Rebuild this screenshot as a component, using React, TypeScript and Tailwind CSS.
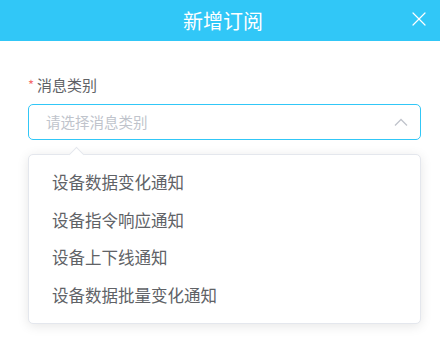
import { X } from 'lucide-react';

const options = ['设备数据变化通知', '设备指令响应通知', '设备上下线通知', '设备数据批量变化通知'];

export default function App() {
  return (
    <div
      className="h-[341px] w-[440px] overflow-hidden bg-white"
      style={{ fontFamily: '"Noto Sans CJK SC", "Noto Sans", sans-serif' }}
    >
      {/* 头部 */}
      <div className="relative flex h-[41px] items-center justify-center bg-[#31c7f7]">
        <span className="ml-[6px] text-[20px] leading-none text-white">新增订阅</span>
        <button className="absolute right-[9px] top-[7px] text-white">
          <X size={24} strokeWidth={1.2} />
        </button>
      </div>

      {/* 表单 */}
      <div className="px-[28px] pt-[34px]">
        <div className="flex items-center text-[15px] leading-[20px] text-[#606266]">
          <span className="mr-[3px] text-[13px] text-[#f56c6c]">*</span>
          消息类别
        </div>

        <div className="mt-[9px] flex h-[36px] w-[393px] items-center justify-between rounded-[5px] border border-[#31c7f7] pl-[17px] pr-[12px]">
          <span className="text-[14.5px] text-[#c0c4cc]">请选择消息类别</span>
          <svg width="14" height="8" viewBox="0 0 14 8" fill="none">
            <path d="M1 7.5 L7 1.5 L13 7.5" stroke="#c0c4cc" strokeWidth="1.3" />
          </svg>
        </div>

        {/* 下拉 */}
        <div className="relative mt-[14px] w-[393px] rounded-[5px] border border-[#e4e7ed] bg-white py-[9px] shadow-[0_2px_12px_rgba(0,0,0,0.1)]">
          <div className="absolute left-[42px] top-[-6px] h-[11px] w-[11px] rotate-45 border-l border-t border-[#e4e7ed] bg-white" />
          {options.map((o) => (
            <div key={o} className="flex h-[37.5px] items-center pl-[23px] text-[16.5px] text-[#606266]">
              {o}
            </div>
          ))}
        </div>
      </div>
    </div>
  );
}
